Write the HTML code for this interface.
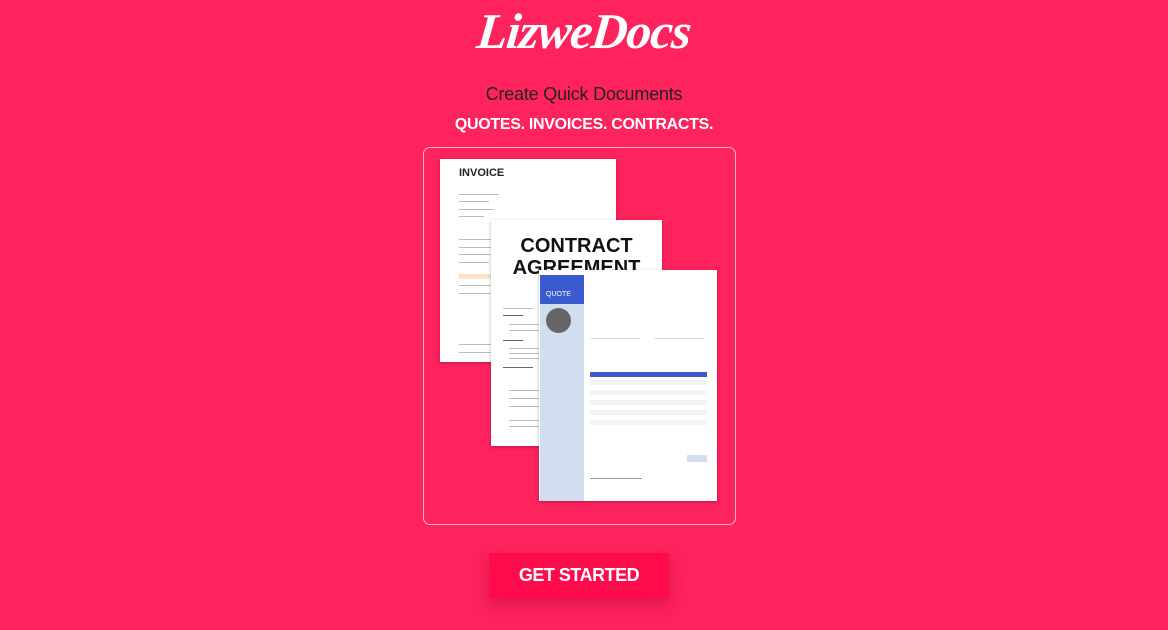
<!DOCTYPE html>
<html><head><style>
*{margin:0;padding:0;box-sizing:border-box}
body{width:1168px;height:630px;background:#fe225d;font-family:"Liberation Sans",sans-serif;position:relative;overflow:hidden}
.a{position:absolute}
.logo{left:0;width:1168px;top:2px;text-align:center;color:#fff;font:italic bold 50px "Liberation Serif",serif;letter-spacing:-1px;transform:skewX(-6deg)}
.t1{left:0;width:1168px;top:84px;text-align:center;font-size:18px;color:#222;letter-spacing:-0.2px}
.t2{left:0;width:1168px;top:116px;text-align:center;font-size:16px;color:#fff;font-weight:bold;letter-spacing:-0.3px}
.box{left:423px;top:147px;width:313px;height:378px;border:1.5px solid #f6b6c6;border-radius:7px}
.pg{background:#fff;box-shadow:0 1px 3px rgba(0,0,0,.3)}
.ln{position:absolute;height:1px;background:#bbb}
.btn{left:489px;top:553px;width:180px;height:45px;background:#ff0a4b;color:#fff;font-weight:bold;font-size:18px;text-align:center;line-height:45px;letter-spacing:-0.5px;box-shadow:0 6px 14px rgba(150,0,40,.35)}
</style></head><body>
<div class="a logo">LizweDocs</div>
<div class="a t1">Create Quick Documents</div>
<div class="a t2">QUOTES. INVOICES. CONTRACTS.</div>
<div class="a box"></div>
<div class="a pg" style="left:440px;top:159px;width:176px;height:203px">
 <div class="a" style="left:19px;top:8px;font-weight:bold;font-size:11px;color:#222">INVOICE</div>
 <div class="ln" style="left:19px;top:35px;width:40px"></div><div class="ln" style="left:19px;top:42px;width:30px"></div>
 <div class="ln" style="left:19px;top:50px;width:35px"></div><div class="ln" style="left:19px;top:57px;width:25px"></div>
 <div class="ln" style="left:19px;top:80px;width:40px"></div><div class="ln" style="left:19px;top:88px;width:40px"></div>
 <div class="ln" style="left:19px;top:95px;width:40px"></div><div class="ln" style="left:19px;top:103px;width:30px"></div>
 <div class="a" style="left:19px;top:115px;width:40px;height:5px;background:#fde0c8"></div>
 <div class="ln" style="left:19px;top:126px;width:40px"></div><div class="ln" style="left:19px;top:134px;width:40px"></div>
 <div class="ln" style="left:19px;top:185px;width:40px"></div><div class="ln" style="left:19px;top:193px;width:40px"></div>
</div>
<div class="a pg" style="left:491px;top:220px;width:171px;height:226px;overflow:hidden">
 <div class="a" style="left:0;width:171px;top:15px;text-align:center;font-weight:bold;font-size:20px;line-height:22px;color:#111">CONTRACT<br>AGREEMENT</div>
 <div class="ln" style="left:12px;top:88px;width:30px"></div><div class="ln" style="left:12px;top:95px;width:20px;background:#666"></div>
 <div class="ln" style="left:18px;top:104px;width:30px"></div><div class="ln" style="left:18px;top:110px;width:30px"></div>
 <div class="ln" style="left:12px;top:120px;width:20px;background:#666"></div>
 <div class="ln" style="left:18px;top:128px;width:30px"></div><div class="ln" style="left:18px;top:133px;width:30px"></div><div class="ln" style="left:18px;top:138px;width:30px"></div>
 <div class="ln" style="left:12px;top:147px;width:30px;background:#666"></div>
 <div class="ln" style="left:18px;top:170px;width:30px"></div><div class="ln" style="left:18px;top:178px;width:30px"></div><div class="ln" style="left:18px;top:186px;width:30px"></div>
 <div class="ln" style="left:18px;top:200px;width:30px"></div><div class="ln" style="left:18px;top:206px;width:30px"></div>
</div>
<div class="a pg" style="left:539px;top:270px;width:178px;height:231px">
 <div class="a" style="left:1px;top:5px;width:44px;height:226px;background:#d1deef"></div>
 <div class="a" style="left:1px;top:5px;width:44px;height:29px;background:#3a5bd0;color:#fff;font-size:7px;padding:16px 0 0 6px">QUOTE</div>
 <div class="a" style="left:7px;top:38px;width:25px;height:25px;border-radius:50%;background:#666"></div>
 <div class="a" style="left:51px;top:102px;width:117px;height:5px;background:#3a5bd0"></div>
 <div class="a" style="left:51px;top:110px;width:117px;height:50px;background:repeating-linear-gradient(#f3f3f3 0 5px,#fff 5px 10px)"></div>
 <div class="a" style="left:148px;top:185px;width:20px;height:7px;background:#d1deef"></div>
 <div class="ln" style="left:51px;top:68px;width:50px;background:#ddd"></div><div class="ln" style="left:115px;top:68px;width:50px;background:#ddd"></div>
 <div class="ln" style="left:51px;top:208px;width:52px;background:#999"></div>
</div>
<div class="a btn">GET STARTED</div>
</body></html>
